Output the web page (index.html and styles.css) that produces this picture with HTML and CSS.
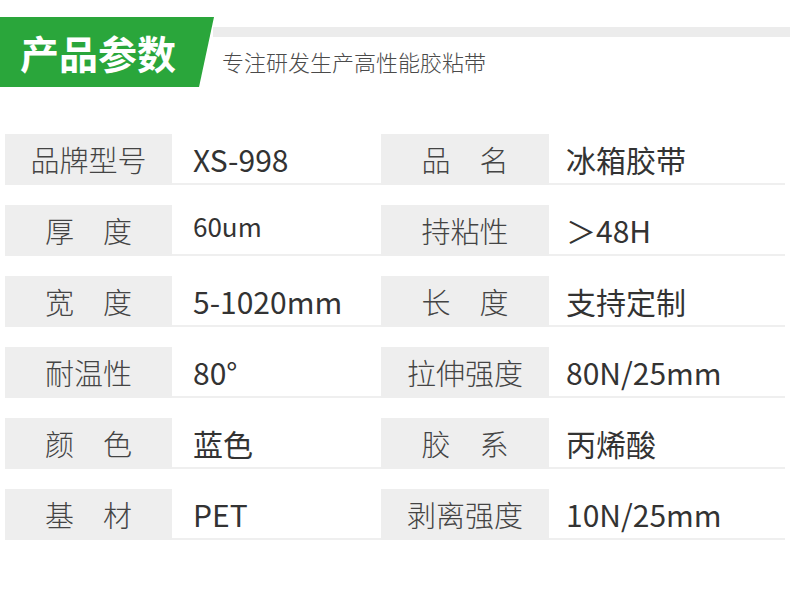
FILE: index.html
```html
<!DOCTYPE html>
<html lang="zh-CN">
<head>
<meta charset="utf-8">
<title>产品参数</title>
<link rel="stylesheet" href="styles.css">
</head>
<body>
<div class="page">
  <div class="header">
    <div class="badge"><span class="badge-text">产品参数</span></div>
    <div class="header-right">
      <div class="bar"></div>
      <div class="subtitle">专注研发生产高性能胶粘带</div>
    </div>
  </div>
  <div class="table">
    <div class="row">
      <div class="label">品牌型号</div>
      <div class="value v1">XS-998</div>
      <div class="label l2">品　名</div>
      <div class="value v2">冰箱胶带</div>
    </div>
    <div class="row">
      <div class="label">厚　度</div>
      <div class="value v1 raised">60um</div>
      <div class="label l2">持粘性</div>
      <div class="value v2">＞48H</div>
    </div>
    <div class="row">
      <div class="label">宽　度</div>
      <div class="value v1">5-1020mm</div>
      <div class="label l2">长　度</div>
      <div class="value v2">支持定制</div>
    </div>
    <div class="row">
      <div class="label">耐温性</div>
      <div class="value v1">80°</div>
      <div class="label l2">拉伸强度</div>
      <div class="value v2">80N/25mm</div>
    </div>
    <div class="row">
      <div class="label">颜　色</div>
      <div class="value v1">蓝色</div>
      <div class="label l2">胶　系</div>
      <div class="value v2">丙烯酸</div>
    </div>
    <div class="row">
      <div class="label">基　材</div>
      <div class="value v1">PET</div>
      <div class="label l2">剥离强度</div>
      <div class="value v2">10N/25mm</div>
    </div>
  </div>
</div>
</body>
</html>
```
FILE: styles.css
```css
* { box-sizing: border-box; }
html, body { margin: 0; padding: 0; background: #ffffff; }
body {
  font-family: "Noto Sans CJK SC", "Noto Sans", sans-serif;
  width: 790px;
  height: 589px;
  overflow: hidden;
}
.page { width: 790px; }

.header {
  display: flex;
  margin-top: 17px;
  height: 70px;
}
.badge {
  width: 214px;
  height: 70px;
  background: #2aa63b;
  clip-path: polygon(0 0, 100% 0, 93% 100%, 0 100%);
  display: flex;
  align-items: center;
  padding-left: 20px;
}
.badge-text {
  color: #ffffff;
  font-weight: 700;
  font-size: 39px;
  line-height: 1;
}
.header-right {
  flex: 1;
  padding-top: 10px;
  margin-left: -1px;
}
.bar {
  height: 10px;
  background: #ececec;
}
.subtitle {
  margin-top: 13px;
  padding-left: 9px;
  font-size: 22px;
  line-height: 22px;
  font-weight: 300;
  color: #4a4a4a;
}

.table {
  margin-top: 47px;
  margin-left: 5px;
  width: 780px;
  display: flex;
  flex-direction: column;
  gap: 20px;
}
.row {
  display: flex;
  height: 51px;
  border-bottom: 2px solid #efefef;
}
.label {
  background: #eeeeee;
  height: 51px;
  display: flex;
  align-items: center;
  justify-content: center;
  font-size: 29px;
  font-weight: 300;
  color: #444444;
  width: 167px;
  flex: none;
  line-height: 1;
}
.l2 { width: 168px; }
.value {
  display: flex;
  align-items: center;
  font-size: 30px;
  font-weight: 400;
  color: #333333;
  line-height: 1;
  height: 49px;
}
.v1 { width: 209px; padding-left: 21px; }
.v2 { flex: 1; padding-left: 17px; }
.raised { font-size: 26px; padding-bottom: 7px; }
```
